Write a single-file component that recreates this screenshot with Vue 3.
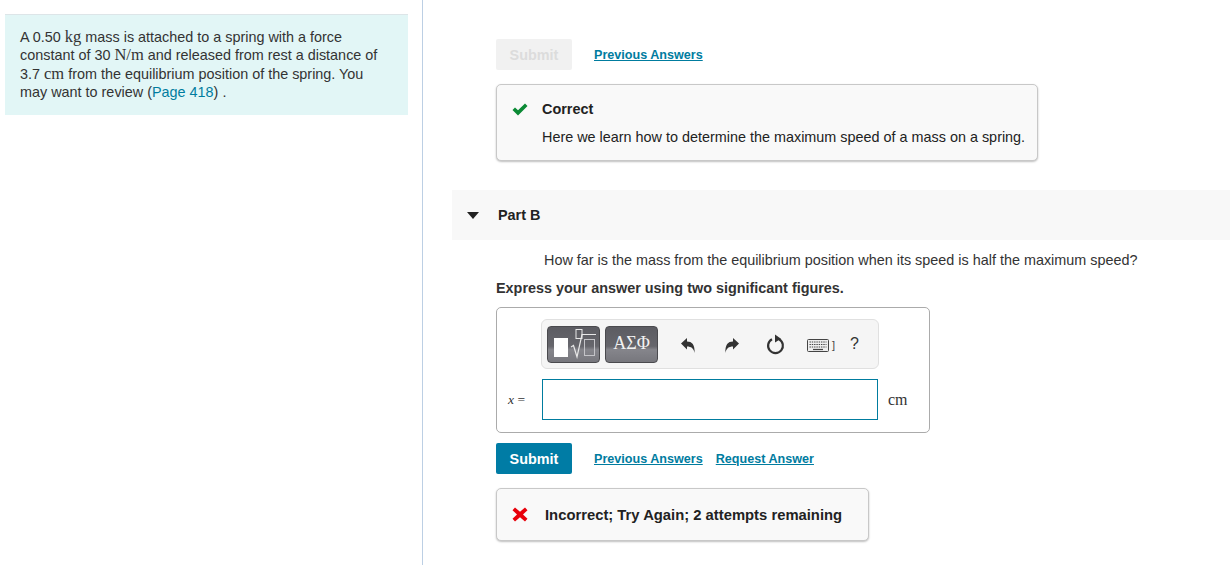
<template>
  <div class="page">
    <div class="left">
      <div class="intro">
        A 0.50 <span class="math">kg</span> mass is attached to a spring with a force
        constant of 30 <span class="math">N/m</span> and released from rest a distance of
        3.7 <span class="math">cm</span> from the equilibrium position of the spring. You
        may want to review (<a class="plain-link">Page 418</a>) .
      </div>
    </div>

    <div class="right">
      <div class="actions first">
        <button class="submit disabled">Submit</button>
        <a class="link">Previous Answers</a>
      </div>

      <div class="feedback correct">
        <div class="feedback-head">
          <svg class="status-icon" width="16" height="13" viewBox="0 0 16 13">
            <path d="M0.5 7 L3 4.4 L6 7.3 L13 0.5 L15.5 3 L6 12.5 Z" fill="#0b8a35" />
          </svg>
          <span class="feedback-title">Correct</span>
        </div>
        <p class="feedback-text">Here we learn how to determine the maximum speed of a mass on a spring.</p>
      </div>

      <div class="part-bar">
        <svg class="caret" width="12" height="7" viewBox="0 0 12 7">
          <path d="M0 0 H12 L6 7 Z" fill="#222" />
        </svg>
        <span class="part-title">Part B</span>
      </div>

      <p class="question">How far is the mass from the equilibrium position when its speed is half the maximum speed?</p>
      <p class="express">Express your answer using two significant figures.</p>

      <div class="answer-box">
        <div class="toolbar">
          <div class="tool-btn">
            <svg width="46" height="32" viewBox="0 0 46 32">
              <rect x="3" y="10" width="14" height="19" fill="#fff" />
              <rect x="25" y="1.5" width="6" height="9" fill="none" stroke="#e8e8e8" />
              <path d="M20 19 L22.5 17.5 L26 29 L31 6.5 H45" fill="none" stroke="#e8e8e8" stroke-width="1.2" />
              <rect x="33.5" y="11.5" width="10" height="16" fill="none" stroke="#c4c4c8" />
            </svg>
          </div>
          <div class="tool-btn greek">ΑΣΦ</div>
          <div class="tool-icons">
            <svg class="undo" width="14" height="15" viewBox="0 0 14 15">
              <path d="M0 5.5 L6 0 V3.4 C11 3.4 14 6.5 13.6 15 C12.6 10.6 10.4 8.6 6 8.6 V11.6 Z" fill="#333" />
            </svg>
            <svg class="redo" width="14" height="15" viewBox="0 0 14 15">
              <path d="M14 5.5 L8 0 V3.4 C3 3.4 0 6.5 0.4 15 C1.4 10.6 3.6 8.6 8 8.6 V11.6 Z" fill="#333" />
            </svg>
            <svg class="reset" width="19" height="21" viewBox="0 0 19 21">
              <path d="M6 5.2 A7.4 7.4 0 1 0 13 5.2" fill="none" stroke="#333" stroke-width="2.2" />
              <path d="M9 0.5 L15 4.8 L9 8.6 Z" fill="#333" />
            </svg>
            <svg class="keyboard" width="22" height="13" viewBox="0 0 22 13">
              <rect x="0.5" y="0.5" width="21" height="12" rx="1" fill="#eee" stroke="#444" />
              <path d="M2.5 3 H19.5 M2.5 5.5 H19.5 M2.5 8 H19.5" stroke="#444" stroke-width="1.2" stroke-dasharray="1.4 0.9" />
              <path d="M6 10.5 H16" stroke="#444" stroke-width="1.2" />
            </svg>
            <span class="bracket">]</span>
            <span class="help">?</span>
          </div>
        </div>
        <div class="input-row">
          <span class="var"><i>x</i> =</span>
          <input class="answer-input" type="text" />
          <span class="unit">cm</span>
        </div>
      </div>

      <div class="actions second">
        <button class="submit">Submit</button>
        <a class="link">Previous Answers</a>
        <a class="link request">Request Answer</a>
      </div>

      <div class="feedback incorrect">
        <svg class="status-icon" width="16" height="15" viewBox="0 0 16 15">
          <path d="M3 0.5 L8 4.8 L13 0.5 L15.5 3.2 L11 7.5 L15.5 11.8 L13 14.5 L8 10.2 L3 14.5 L0.5 11.8 L5 7.5 L0.5 3.2 Z" fill="#e8000b" />
        </svg>
        <span class="incorrect-text">Incorrect; Try Again; 2 attempts remaining</span>
      </div>
    </div>
  </div>
</template>

<script setup>
</script>

<style>
html, body {
  margin: 0;
  background: #fff;
  overflow: hidden;
}
</style>

<style scoped>
.page {
  display: flex;
  height: 565px;
  overflow: hidden;
  font-family: "Liberation Sans", Arial, sans-serif;
  font-size: 14.4px;
  color: #222;
}

.left {
  flex: 0 0 423px;
  box-sizing: border-box;
  height: 100%;
  padding: 14px 14px 0 5px;
  border-right: 1px solid #bccfe4;
}

.intro {
  box-sizing: border-box;
  height: 101px;
  padding: 13px 15px 0;
  background: #e2f6f6;
  border-top: 1px solid #dde5e8;
  line-height: 18.4px;
  color: #333;
}

.math {
  font-family: "Liberation Serif", serif;
  font-size: 16.5px;
}

.plain-link {
  color: #007c9f;
}

.right {
  flex: 1;
  min-width: 0;
  padding-left: 29px;
  padding-top: 39px;
}

.actions {
  display: flex;
  align-items: center;
  margin-left: 44px;
}

.submit {
  width: 76px;
  height: 31px;
  padding: 0;
  border: none;
  border-radius: 2px;
  background: #007ca5;
  color: #fff;
  font-family: inherit;
  font-size: 14.4px;
  font-weight: bold;
}

.submit.disabled {
  background: #f1f1f1;
  color: #dcdcdc;
}

.link {
  margin-left: 22px;
  color: #007c9f;
  font-size: 12.6px;
  font-weight: bold;
  text-decoration: underline;
}

.link.request {
  margin-left: 13px;
}

.feedback {
  margin-left: 44px;
  box-sizing: border-box;
  background: #f9f9f9;
  border: 1px solid #c8c8c8;
  border-radius: 5px;
  box-shadow: 0 1px 2px rgba(0, 0, 0, 0.25);
}

.correct {
  width: 542px;
  height: 77px;
  margin-top: 14px;
  padding: 14px 15px 0;
}

.feedback-head {
  display: flex;
  align-items: center;
  height: 20px;
}

.status-icon {
  flex: none;
}

.feedback-title {
  margin-left: 14px;
  font-weight: bold;
  color: #222;
}

.feedback-text {
  margin: 9px 0 0 30px;
  line-height: 18px;
  white-space: nowrap;
}

.part-bar {
  display: flex;
  align-items: center;
  height: 50px;
  margin-top: 29px;
  padding-left: 15px;
  background: #f8f8f8;
}

.part-title {
  margin-left: 19px;
  font-weight: bold;
}

.question {
  margin: 11px 0 0 92px;
  line-height: 18px;
  color: #333;
  white-space: nowrap;
}

.express {
  margin: 10px 0 0 44px;
  line-height: 18px;
  font-weight: bold;
  color: #333;
}

.answer-box {
  box-sizing: border-box;
  width: 434px;
  height: 126px;
  margin: 10px 0 0 44px;
  padding: 11px 0 0 0;
  border: 1px solid #ababab;
  border-radius: 5px;
}

.toolbar {
  display: flex;
  align-items: center;
  box-sizing: border-box;
  width: 338px;
  height: 50px;
  margin-left: 44px;
  padding-left: 5px;
  background: #f5f5f5;
  border: 1px solid #e0e0e0;
  border-radius: 6px;
}

.tool-btn {
  display: flex;
  align-items: center;
  justify-content: center;
  box-sizing: border-box;
  width: 53px;
  height: 37px;
  margin-right: 5px;
  border: 1px solid #4a4a4e;
  border-radius: 4px;
  background: linear-gradient(#5c5c62 0%, #66666c 55%, #85858b 65%, #77777d 100%);
}

.greek {
  align-items: flex-start;
  padding-top: 6px;
  color: #f2f2f2;
  font-family: "Liberation Serif", serif;
  font-size: 18px;
  line-height: 20px;
}

.tool-icons {
  display: flex;
  align-items: center;
  margin-left: 18px;
  height: 100%;
}

.undo {
  margin-top: 2px;
}

.redo {
  margin: 2px 0 0 30px;
}

.reset {
  margin: 0 0 0 27px;
}

.keyboard {
  margin: 2px 0 0 22px;
}

.bracket {
  margin: 2px 0 0 3px;
  font-size: 11px;
  color: #444;
}

.help {
  margin-left: 15px;
  font-size: 16px;
  color: #333;
}

.input-row {
  display: flex;
  align-items: center;
  margin-top: 10px;
}

.var {
  flex: 0 0 45px;
  box-sizing: border-box;
  padding-left: 11px;
  font-family: "Liberation Serif", serif;
  font-size: 13.5px;
  color: #333;
}

.answer-input {
  box-sizing: border-box;
  width: 336px;
  height: 41px;
  padding: 0;
  background: #fff;
  border: 1px solid #007c9f;
  outline: none;
}

.unit {
  margin-left: 10px;
  font-family: "Liberation Serif", serif;
  font-size: 16px;
  color: #333;
}

.second {
  margin-top: 10px;
}

.incorrect {
  display: flex;
  align-items: center;
  width: 373px;
  height: 53px;
  margin-top: 14px;
  padding-left: 15px;
}

.incorrect-text {
  margin-left: 17px;
  font-size: 14.8px;
  font-weight: bold;
  white-space: nowrap;
}
</style>
